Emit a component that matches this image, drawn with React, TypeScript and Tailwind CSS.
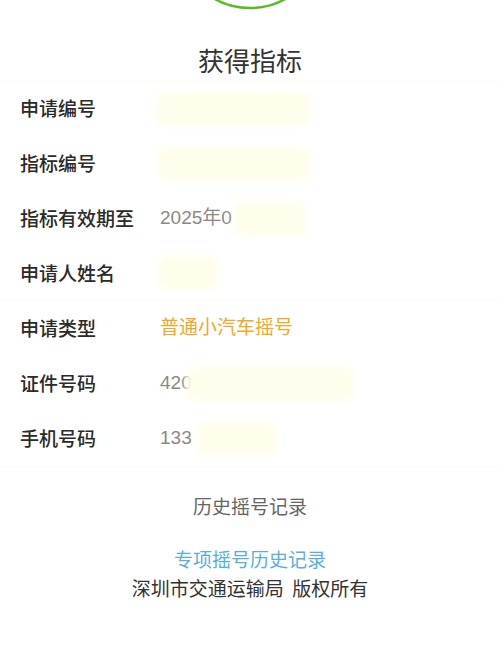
import React from 'react';

type Row = {
  label: string;
  value?: string;
  valueClass?: string;
  mask?: { ml: string; w: string };
  divider?: boolean;
};

const rows: Row[] = [
  { label: '申请编号', mask: { ml: 'ml-[-5px]', w: 'w-[155px]' } },
  { label: '指标编号', mask: { ml: 'ml-[-3px]', w: 'w-[153px]' } },
  { label: '指标有效期至', value: '2025年0', mask: { ml: 'ml-[2px]', w: 'w-[72px]' } },
  { label: '申请人姓名', mask: { ml: 'ml-[-2px]', w: 'w-[60px]' }, divider: true },
  { label: '申请类型', value: '普通小汽车摇号', valueClass: 'text-[#f5a623]' },
  { label: '证件号码', value: '420', mask: { ml: 'ml-[-6px]', w: 'w-[168px]' } },
  { label: '手机号码', value: '133', mask: { ml: 'ml-[5px]', w: 'w-[80px]' } },
];

export default function App() {
  return (
    <div className="w-[500px] h-[667px] bg-white overflow-hidden font-['Noto_Sans_CJK_SC','Noto_Sans',sans-serif]">
      {/* top of the status circle */}
      <svg width="500" height="10" className="block">
        <circle cx="250" cy="-64" r="72" fill="none" stroke="#5cb82a" strokeWidth="2.5" />
      </svg>

      <h1 className="mt-[32px] h-[36px] leading-[36px] text-center text-[26px] text-[#333]">获得指标</h1>

      <div className="mt-[2px] border-t border-[#fdfcf5]">
        {rows.map(r => (
          <div
            key={r.label}
            className={
              'h-[55px] flex items-center pl-[20px] ' +
              (r.divider ? 'border-b border-[#fdfbf2]' : '')
            }
          >
            <span className="w-[140px] text-[19px] font-medium text-[#2a2a2a]">{r.label}</span>
            <span
              className={
                "flex items-center text-[19px] font-['Liberation_Sans','Noto_Sans_CJK_SC',sans-serif] " +
                (r.valueClass ?? 'text-[#8c8985]')
              }
            >
              {r.value}
              {r.mask && (
                <span
                  className={'inline-block h-[34px] rounded-lg bg-[#fffeec] blur-[3px] ' + r.mask.ml + ' ' + r.mask.w}
                />
              )}
            </span>
          </div>
        ))}
      </div>

      <div className="border-t border-[#fdfcf3] pt-[25px] text-center text-[19px] leading-[28px] text-[#666]">
        历史摇号记录
      </div>
      <div className="mt-[25px] text-center text-[19px] leading-[28px] text-[#5aaedc]">专项摇号历史记录</div>
      <div className="mt-[1px] text-center text-[19px] leading-[28px] text-[#333]">深圳市交通运输局&nbsp;&nbsp;版权所有</div>
    </div>
  );
}
